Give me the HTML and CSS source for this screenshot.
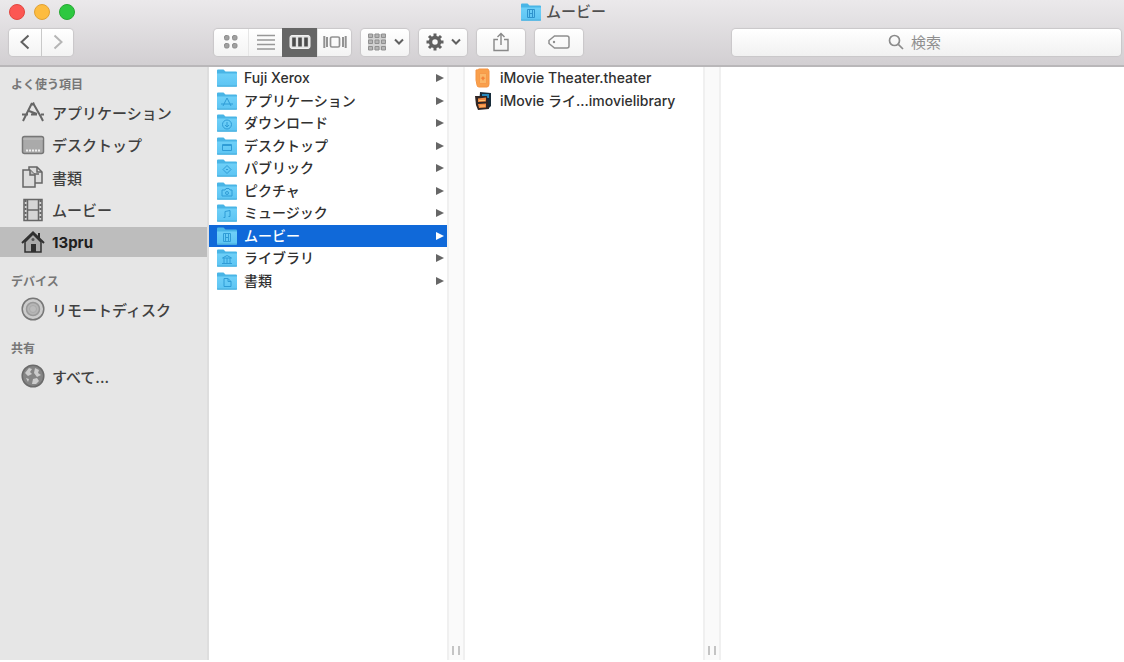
FILE: index.html
```html
<!DOCTYPE html>
<html lang="ja">
<head>
<meta charset="utf-8">
<title>ムービー</title>
<link rel="stylesheet" href="styles.css">
</head>
<body>
<svg class="defs" aria-hidden="true">
  <defs>
    <linearGradient id="blue" x1="0" y1="0" x2="0" y2="1"><stop offset="0" stop-color="#6fd0f8"/><stop offset="1" stop-color="#5cc4f3"/></linearGradient>
    <symbol id="folder" viewBox="0 0 22 18">
      <path d="M1 1.500Q1 .5 2 .5H7.500L9.500 2.500H20Q21 2.500 21 3.500V16.500Q21 17.500 20 17.500H2Q1 17.500 1 16.500Z" fill="#49b5e6"/>
      <path d="M1 4.500H21V16.500Q21 17.500 20 17.500H2Q1 17.500 1 16.500Z" fill="url(#blue)"/>
      <path d="M1 17H21" stroke="#4aaedb" stroke-width="1"/>
    </symbol>
    <symbol id="arrow" viewBox="0 0 8 10"><path d="M0 1L8 5L0 9Z" fill="currentColor"/></symbol>
  </defs>
</svg>
<div class="window">
  <header class="titlebar">
    <div class="title-row">
      <div class="lights">
        <button class="light red" aria-label="閉じる"></button>
        <button class="light yellow" aria-label="しまう"></button>
        <button class="light green" aria-label="拡大"></button>
      </div>
      <h1 class="title">
        <svg class="folder" viewBox="0 0 22 18"><use href="#folder"/><g fill="none" stroke="#2f93cd"><path d="M7.500 6.500h7v8h-7zM9.500 6.500v8M12.500 6.500v8M9.500 10.500h3"/></g></svg>
        ムービー
      </h1>
    </div>
    <div class="toolbar">
      <div class="group nav">
        <button class="btn" aria-label="戻る"><svg width="12" height="16" viewBox="0 0 12 16"><path d="M9.500 1.500L2.500 8L9.500 14.500" fill="none" stroke="#606060" stroke-width="2"/></svg></button>
        <button class="btn" aria-label="進む"><svg width="12" height="16" viewBox="0 0 12 16"><path d="M2.500 1.500L9.500 8L2.500 14.500" fill="none" stroke="#b5b5b5" stroke-width="2"/></svg></button>
      </div>
      <div class="group views">
        <button class="btn" aria-label="アイコン表示"><svg width="16" height="16" viewBox="0 0 16 16" fill="#a0a0a0" stroke="#8d8d8d"><rect x="1.500" y="1.500" width="4.500" height="4.500" rx="1.500"/><rect x="9.500" y="1.500" width="4.500" height="4.500" rx="1.500"/><rect x="1.500" y="9.500" width="4.500" height="4.500" rx="1.500"/><rect x="9.500" y="9.500" width="4.500" height="4.500" rx="1.500"/></svg></button>
        <button class="btn" aria-label="リスト表示"><svg width="18" height="16" viewBox="0 0 18 16"><path d="M0 1.500h18M0 6h18M0 10.500h18M0 15h18" stroke="#989898" stroke-width="1.700"/></svg></button>
        <button class="btn active" aria-label="カラム表示" aria-pressed="true"><svg width="22" height="16" viewBox="0 0 22 16"><rect x="1" y="1.500" width="20" height="13" rx="2" fill="#e4e4e4" stroke="#f2f2f2"/><path d="M5 3.500v9M11 3.500v9M17 3.500v9" stroke="#4c4c4c" stroke-width="3.600"/></svg></button>
        <button class="btn" aria-label="カバーフロー"><svg width="24" height="14" viewBox="0 0 24 14" fill="none" stroke="#929292" stroke-width="1.700"><rect x="7.500" y="2" width="9" height="10" rx="1.500"/><path d="M1.300 1v12M4 2v10M22.700 1v12M20 2v10" stroke-width="2"/></svg></button>
      </div>
      <div class="group">
        <button class="btn menu" aria-label="グループ"><svg width="20" height="18" viewBox="0 0 20 18" fill="#b4b4b4" stroke="#909090"><path d="M1 1h18v16H1z" stroke="none" fill="#d2d2d2"/><path d="M1.500 1h4v3.500h-4zM8 1h4v3.500H8zM14.500 1h4v3.500h-4zM1.500 7h4v3.500h-4zM8 7h4v3.500H8zM14.500 7h4v3.500h-4zM1.500 13.500h4v3.500h-4zM8 13.500h4v3.500H8zM14.500 13.500h4v3.500h-4z"/></svg><svg width="10" height="8" viewBox="0 0 10 8"><path d="M1 1.500L5 5.500L9 1.500" fill="none" stroke="#606060" stroke-width="2"/></svg></button>
      </div>
      <div class="group">
        <button class="btn menu" aria-label="操作"><svg width="18" height="18" viewBox="-9 -9 18 18"><path d="M0-8.500V8.500M-8.500 0H8.500M-6-6L6 6M-6 6L6-6" stroke="#606060" stroke-width="3"/><circle r="4.500" fill="#f8f8f8" stroke="#606060" stroke-width="3.500"/></svg><svg width="10" height="8" viewBox="0 0 10 8"><path d="M1 1.500L5 5.500L9 1.500" fill="none" stroke="#606060" stroke-width="2"/></svg></button>
      </div>
      <div class="group">
        <button class="btn menu" aria-label="共有"><svg width="16" height="20" viewBox="0 0 16 20" fill="none" stroke="#888" stroke-width="1.400"><path d="M5 7.500H1V18.500H15V7.500H11M8 13V2M4.500 5L8 1.500L11.500 5"/></svg></button>
      </div>
      <div class="group">
        <button class="btn menu" aria-label="タグ"><svg width="22" height="14" viewBox="0 0 22 14"><path d="M6.500 1H19Q21 1 21 3V11Q21 13 19 13H6.500L1 8.500V5.500Z" fill="none" stroke="#8e8e8e" stroke-width="1.500"/><circle cx="6" cy="7" r="1.200" fill="#8e8e8e"/></svg></button>
      </div>
      <label class="search">
        <svg width="16" height="16" viewBox="0 0 16 16" fill="none" stroke="#8b8b8b" stroke-width="1.700"><circle cx="6.500" cy="6.500" r="5"/><path d="M10.300 10.300L15 15"/></svg>
        <input type="text" placeholder="検索" aria-label="検索">
      </label>
    </div>
  </header>
  <main class="body">
    <nav class="sidebar">
      <h2>よく使う項目</h2>
      <ul class="favorites">
        <li><a href="#"><svg viewBox="0 0 24 24" fill="none" stroke="#666" stroke-width="2"><path d="M11 3L4 17M12 3L20 17M13 2.500l-2 2.500M1 14.500H7M10 14.500h6M20 14.500h3M4 17L2 21M20 17l2 4M8 11l8 3"/></svg>アプリケーション</a></li>
        <li><a href="#"><svg viewBox="0 0 24 24"><rect x="1.500" y="3.500" width="21" height="17" rx="2" fill="#aaa" stroke="#777" stroke-width="1.500"/><path d="M2 6h20" stroke="#c2c2c2"/><path d="M5 17.500h14" stroke="#eee" stroke-width="2" stroke-dasharray="2 1"/></svg>デスクトップ</a></li>
        <li><a href="#"><svg viewBox="0 0 24 24" fill="#ddd" stroke="#666" stroke-width="1.500"><path d="M8 6V2H16L21 7V18H13"/><path d="M16 2v5h5M12 9h6" fill="none"/><path d="M2 5H9L14 10V22H2Z"/><path d="M9 5v5h5" fill="#bbb"/></svg>書類</a></li>
        <li><a href="#"><svg viewBox="0 0 24 24" fill="none" stroke="#666"><path d="M3 1.500h18v21H3z" fill="#d5d5d5" stroke-width="1.500"/><path d="M6.500 2v20M17.500 2v20M6.500 12h11" stroke-width="1.500"/><path d="M4.500 2v20M19.500 2v20" stroke-width="2" stroke-dasharray="2 2"/></svg>ムービー</a></li>
        <li><a href="#" class="current" aria-current="page"><svg viewBox="0 0 24 24"><path d="M4 12L12 4L20 12V22H4Z" fill="#aaa" stroke="#303030" stroke-width="1.500"/><path d="M1 13L12 2.500L23 13M18 3v5" fill="none" stroke="#303030" stroke-width="2"/><path d="M10 14h5v8h-5z" fill="#303030"/><circle cx="12" cy="9.500" r="1.500" fill="#555"/></svg>13pru</a></li>
      </ul>
      <h2>デバイス</h2>
      <ul>
        <li><a href="#"><svg viewBox="0 0 24 24"><circle cx="12" cy="12" r="10.800" fill="#ccc" stroke="#777" stroke-width="1.500"/><circle cx="12" cy="12" r="6.500" fill="#b5b5b5" stroke="#999" stroke-width="1.500"/><circle cx="12" cy="12" r="3.500" fill="#bbb" stroke="#aaa"/></svg>リモートディスク</a></li>
      </ul>
      <h2>共有</h2>
      <ul>
        <li><a href="#"><svg viewBox="0 0 24 24"><circle cx="12" cy="12" r="10.800" fill="#858585" stroke="#6b6b6b" stroke-width="1.500"/><path d="M8 4L11 5L9 8L11 10L7 12L4 9ZM14 4L18 6L17 9L20 11L16 13L13 9ZM5 14L8 15L7 18ZM12 15L16 14L18 17L15 20L11 20Z" fill="#ccc"/></svg>すべて...</a></li>
      </ul>
    </nav>
    <section class="column">
      <ul class="files ten">
        <li><a href="#"><svg class="folder" viewBox="0 0 22 18"><use href="#folder"/></svg><span>Fuji Xerox</span><svg class="arrow"><use href="#arrow"/></svg></a></li>
        <li><a href="#"><svg class="folder" viewBox="0 0 22 18"><use href="#folder"/><path class="mark" d="M11 6L7 14M11 6l4 8M5 12h12"/></svg><span>アプリケーション</span><svg class="arrow"><use href="#arrow"/></svg></a></li>
        <li><a href="#"><svg class="folder" viewBox="0 0 22 18"><use href="#folder"/><circle class="mark" cx="11" cy="10.500" r="4.500"/><path class="mark" d="M11 8v5M9 11l2 2l2-2"/></svg><span>ダウンロード</span><svg class="arrow"><use href="#arrow"/></svg></a></li>
        <li><a href="#"><svg class="folder" viewBox="0 0 22 18"><use href="#folder"/><path class="mark" d="M6.500 7.500h9v6h-9zM7 8.500h8"/></svg><span>デスクトップ</span><svg class="arrow"><use href="#arrow"/></svg></a></li>
        <li><a href="#"><svg class="folder" viewBox="0 0 22 18"><use href="#folder"/><path class="mark" d="M11 6.500L15 10.500L11 14.500L7 10.500ZM10 10.500h2"/></svg><span>パブリック</span><svg class="arrow"><use href="#arrow"/></svg></a></li>
        <li><a href="#"><svg class="folder" viewBox="0 0 22 18"><use href="#folder"/><path class="mark" d="M6 8h3l1-1.500h3l1 1.500h2v6H6z"/><circle class="mark" cx="11" cy="11" r="1.500"/></svg><span>ピクチャ</span><svg class="arrow"><use href="#arrow"/></svg></a></li>
        <li><a href="#"><svg class="folder" viewBox="0 0 22 18"><use href="#folder"/><path class="mark" d="M9 13.500V7.500L14 6.500V12.500M9 13.500H7.500M14 12.500H12.500"/></svg><span>ミュージック</span><svg class="arrow"><use href="#arrow"/></svg></a></li>
        <li><a href="#" class="selected" aria-current="true"><svg class="folder" viewBox="0 0 22 18"><use href="#folder"/><path class="mark" d="M7.500 6.500h7v8h-7zM9.500 6.500v8M12.500 6.500v8M9.500 10.500h3"/></svg><span>ムービー</span><svg class="arrow"><use href="#arrow"/></svg></a></li>
        <li><a href="#"><svg class="folder" viewBox="0 0 22 18"><use href="#folder"/><path class="mark" d="M6.500 9L11 6.500L15.500 9ZM8 9v5M11 9v5M14 9v5M6 14.500h10"/></svg><span>ライブラリ</span><svg class="arrow"><use href="#arrow"/></svg></a></li>
        <li><a href="#"><svg class="folder" viewBox="0 0 22 18"><use href="#folder"/><path class="mark" d="M8 6.500h4l3 3v5H8zM12 6.500v3h3"/></svg><span>書類</span><svg class="arrow"><use href="#arrow"/></svg></a></li>
      </ul>
    </section>
    <div class="divider" role="separator"></div>
    <section class="column">
      <ul class="files two">
        <li><a href="#"><svg class="file" viewBox="0 0 18 20"><path d="M2 2Q4 2 5 1H14L15 3V16Q15 19 13 19H5Q3 19 3 17L2 12Z" fill="#f9a04c" stroke="#f59443"/><path d="M5.500 5.500h7v10h-7z" fill="#fbb768" stroke="#f79a4a"/><path d="M9 8l1 1.500l1.500.5l-1.500 1l-1 2l-1-2l-1.500-1l1.500-.5z" fill="#f58238"/></svg><span>iMovie Theater.theater</span></a></li>
        <li><a href="#"><svg class="file" viewBox="0 0 18 20"><path d="M6 1L17 2V15L14 18L5 14Z" fill="#182c3a"/><path d="M8 3h7v4H8z" fill="#2789bd"/><path d="M1 5L13 5L15 18L4 19L2 14Z" fill="#302624"/><path d="M4 7.500l8-1v4l-8 .5zM4 13l8-.5v4l-7 .5z" fill="#f28a42"/><path d="M5 9.500h6M6 15h5" stroke="#ffc36f"/></svg><span>iMovie ライ...imovielibrary</span></a></li>
      </ul>
    </section>
    <div class="divider" role="separator"></div>
    <section class="column last"></section>
  </main>
</div>
</body>
</html>
```
FILE: styles.css
```css
* { box-sizing: border-box; }
body {
  margin: 0;
  font-family: Inter, "Noto Sans CJK JP", sans-serif;
  font-size: 14px;
  color: #303030;
}
.defs { position: absolute; width: 0; height: 0; }
svg { flex: none; display: block; }
ul { list-style: none; margin: 0; padding: 0; }
a { color: inherit; text-decoration: none; }
button { font: inherit; border: 0; padding: 0; margin: 0; }

.window { display: flex; flex-direction: column; height: 100vh; padding-bottom: 2px; background: #fff; }
.titlebar {
  flex: none;
  height: 67px;
  background: linear-gradient(#ebe9eb, #d2cfd2);
  border-bottom: 2px solid #b9b7b9;
}
.title-row { display: grid; grid-template-columns: 1fr auto 1fr; align-items: center; height: 23px; }
.lights { display: flex; gap: 9px; padding-left: 9px; }
.light { width: 16px; height: 16px; border-radius: 50%; }
.red { background: #fc5753; border: 1px solid #e2463f; }
.yellow { background: #fdbc40; border: 1px solid #e0a135; }
.green { background: #2dc840; border: 1px solid #27a833; }
.title { display: flex; align-items: center; gap: 4px; margin: 0; padding-left: 2px; font-size: 15px; line-height: 22px; font-weight: 500; color: #505050; }
.folder { width: 22px; height: 18px; }

.toolbar { display: flex; align-items: center; height: 38px; padding: 0 3px 0 9px; gap: 10px; }
.group { display: flex; flex: none; border-radius: 4px; background: linear-gradient(#fff, #f3f3f3); box-shadow: 0 0 1px 1px #c9c7c9; }
.btn { display: flex; align-items: center; justify-content: center; width: 34px; height: 27px; background: transparent; }
.btn + .btn { border-left: 1px solid #e6e6e6; }
.nav { margin-right: 131px; }
.nav .btn { width: 32px; }
.nav .btn + .btn { border-left: 1px solid #c9c9c9; }
.views .btn.active { width: 35px; background: #666; height: 29px; margin: -1px 0; border: 0; }
.menu { width: 48px; gap: 7px; }
.search {
  display: flex;
  align-items: center;
  justify-content: center;
  gap: 7px;
  flex: 1;
  height: 27px;
  margin-left: 139px;
  padding-right: 22px;
  border-radius: 4px;
  background: linear-gradient(#fff, #f1f1f1);
  box-shadow: 0 0 1px 1px #c9c7c9;
}
.search input { width: 32px; border: 0; padding: 0; background: transparent; font: inherit; font-size: 15px; outline: 0; }
.search input::placeholder { color: #8f8f8f; }

.body { display: flex; flex: 1; min-height: 0; }
.sidebar { width: 209px; flex: none; background: #e6e6e6; border-right: 2px solid #dedede; padding-top: 8px; color: #404040; }
.sidebar h2 { margin: 0; padding-left: 11px; font-size: 12px; line-height: 20px; font-weight: 700; color: #777; }
.sidebar ul { padding-top: 2px; margin-bottom: 15px; }
.favorites { display: flex; flex-direction: column; justify-content: space-between; height: 162px; }
.sidebar a { display: flex; align-items: center; gap: 7px; height: 30px; padding-left: 21px; font-size: 15px; font-weight: 500; }
.sidebar a svg { width: 24px; height: 24px; }
.sidebar .current { background: #bdbdbd; font-weight: 700; color: #202020; }

.column { width: 238px; flex: none; }
.column.last { flex: 1; }
.files { display: grid; grid-auto-rows: 1fr; }
.ten { height: 225px; }
.two { height: 45px; }
.files a { display: flex; align-items: center; height: 100%; padding: 0 3px 0 7px; gap: 6px; font-weight: 500; white-space: nowrap; }
.files span { flex: 1; line-height: 20px; }
.files.two a { padding-left: 9px; gap: 8px; }
.mark { fill: none; stroke: #2f9cd6; }
.file { width: 18px; height: 20px; }
.arrow { width: 8px; height: 10px; color: #666; }
.files .selected { background: #1069d9; color: #fff; }
.selected .arrow { color: #fff; }
.divider {
  display: flex;
  align-items: flex-end;
  justify-content: center;
  width: 18px;
  flex: none;
  padding-bottom: 5px;
  background: #fafafa;
  border: solid #f0f0f0;
  border-width: 0 2px;
}
.divider::after { content: ""; box-sizing: border-box; width: 8px; height: 9px; border: solid #c4c4c4; border-width: 0 2px; }
```
